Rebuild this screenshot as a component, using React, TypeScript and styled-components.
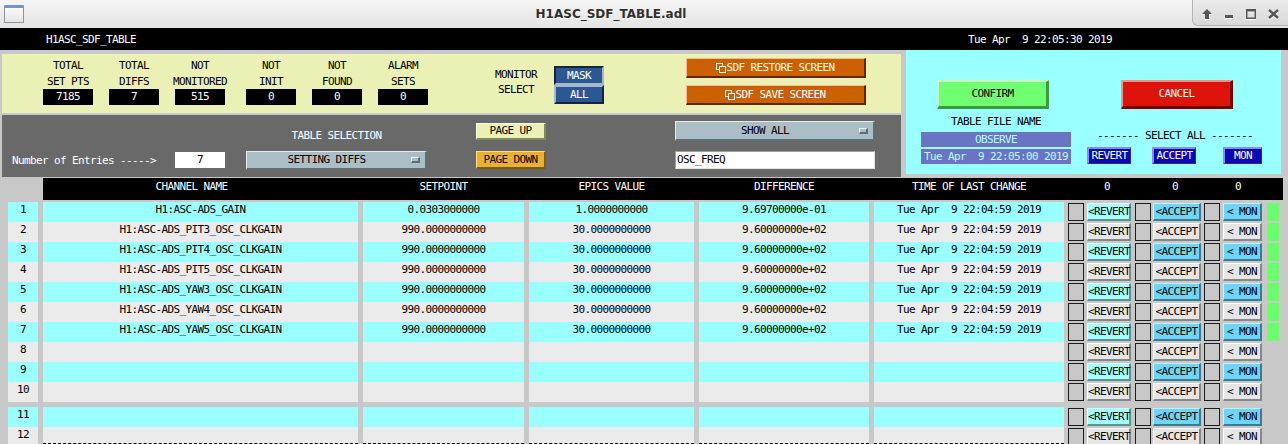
import styled, { createGlobalStyle, css } from "styled-components";

const GlobalStyle = createGlobalStyle`
  html, body {
    margin: 0;
    padding: 0;
    background: #c8c8c8;
    overflow: hidden;
  }
`;

// MEDM screens draw every label with the same narrow fixed-width font
const medmFont = css`
  font-family: "DejaVu Sans Mono", "Liberation Mono", monospace;
  font-size: 11px;
  letter-spacing: -0.62px;
  white-space: pre;
`;

const Window = styled.div`
  width: 1288px;
  height: 444px;
  display: flex;
  flex-direction: column;
  overflow: hidden;
  background: #c8c8c8;
`;

/* ---------- window decoration ---------- */

const TitleBar = styled.div`
  height: 28px;
  flex-shrink: 0;
  display: flex;
  align-items: flex-start;
  background: linear-gradient(#f5f5f5, #e3e3e3);
`;

const WindowIcon = styled.div`
  width: 20px;
  height: 18px;
  margin: 5px 0 0 4px;
  box-sizing: border-box;
  border: 1px solid #8d9297;
  border-top: 3px solid #6f97cb;
  border-radius: 1px;
  background: linear-gradient(#fbfbfb, #e4e4e4);
`;

const WindowTitle = styled.div`
  flex: 1;
  padding-left: 6px;
  text-align: center;
  font-family: "DejaVu Sans", sans-serif;
  font-weight: bold;
  font-size: 12px;
  line-height: 28px;
  color: #2f2f2f;
  text-shadow: 0 1px 0 #fff;
`;

const WindowControls = styled.div`
  width: 96px;
  height: 26px;
  box-sizing: border-box;
  padding: 2px 0 0 3px;
  display: flex;
  align-items: center;
  background: linear-gradient(#ebebeb, #d8d8d8);
  border-left: 1px solid #b3b3b3;
  border-bottom: 1px solid #b3b3b3;
  border-bottom-left-radius: 6px;
`;

const ControlSlot = styled.span`
  width: 22px;
  display: flex;
  justify-content: center;
  svg {
    filter: drop-shadow(0 1px 0 #ffffff);
  }
`;

/* ---------- screen ---------- */

const Screen = styled.div`
  flex: 1;
  display: flex;
  flex-direction: column;
  ${medmFont}
`;

const HeadBar = styled.div`
  height: 22px;
  flex-shrink: 0;
  background: #000;
  color: #fff;
  display: flex;
  align-items: center;
  justify-content: space-between;
  padding: 0 176px 0 46px;
`;

const Upper = styled.div`
  height: 127px;
  flex-shrink: 0;
  display: flex;
  padding-left: 2px;
`;

const LeftColumn = styled.div`
  width: 899px;
  display: flex;
  flex-direction: column;
  gap: 2px;
  padding-top: 4px;
`;

const SummaryPanel = styled.div`
  height: 59px;
  background: #ebf1b5;
  color: #000;
  display: flex;
  align-items: flex-start;
`;

const Stat = styled.div<{ $ml: number }>`
  width: 50px;
  margin-left: ${(p) => p.$ml}px;
  padding-top: 4px;
  display: flex;
  flex-direction: column;
  align-items: center;
`;

const StatLabel = styled.span`
  line-height: 15.5px;
`;

const StatValue = styled.div`
  width: 50px;
  height: 16px;
  line-height: 16px;
  text-align: center;
  background: #000;
  color: #fff;
`;

const MonitorLabel = styled.div`
  width: 60px;
  margin-left: 58px;
  padding-top: 13px;
  display: flex;
  flex-direction: column;
  align-items: center;
  line-height: 15.3px;
`;

const ChoiceStack = styled.div`
  width: 50px;
  margin-left: 8px;
  padding-top: 12px;
  display: flex;
  flex-direction: column;
`;

const ChoiceButton = styled.div<{ $active?: boolean }>`
  height: 19px;
  box-sizing: border-box;
  border: 2px solid;
  border-color: ${(p) =>
    p.$active ? "#13253d #a7b7ca #a7b7ca #13253d" : "#a7b7ca #13253d #13253d #a7b7ca"};
  background: #2b5892;
  color: #fff;
  text-align: center;
  line-height: 15px;
`;

const RelatedStack = styled.div`
  margin-left: 82px;
  padding-top: 4px;
  display: flex;
  flex-direction: column;
  gap: 7px;
`;

const RelatedButton = styled.div`
  width: 180px;
  height: 20px;
  box-sizing: border-box;
  border-style: solid;
  border-width: 1px 2px 2px 1px;
  border-color: #f3bb90 #5c2a00 #5c2a00 #f3bb90;
  background: #cc6000;
  color: #fff;
  display: flex;
  align-items: center;
  justify-content: center;
  line-height: 17px;
`;

const SelectionPanel = styled.div`
  height: 62px;
  background: #696969;
  color: #fff;
  display: flex;
  align-items: flex-start;
`;

const SelCol = styled.div<{ $ml: number; $w: number }>`
  width: ${(p) => p.$w}px;
  margin-left: ${(p) => p.$ml}px;
  padding-top: 6px;
  display: flex;
  flex-direction: column;
  gap: 9px;
`;

const Slot = styled.div`
  height: 20px;
  display: flex;
  align-items: center;
  justify-content: center;
`;

const EntriesLabel = styled.span`
  width: 163px;
`;

const SelectionTitle = styled.span`
  margin-top: 8px;
`;

const EntryBox = styled.div`
  width: 50px;
  height: 16px;
  line-height: 16px;
  text-align: center;
  background: #fff;
  color: #000;
`;

const MenuButton = styled.div<{ $h: number }>`
  width: 100%;
  height: ${(p) => p.$h}px;
  box-sizing: border-box;
  border-style: solid;
  border-width: 1px 2px 2px 1px;
  border-color: #e4ecef #5f6e74 #5f6e74 #e4ecef;
  background: #abbec6;
  color: #000;
  display: flex;
  align-items: center;
`;

const MenuText = styled.span`
  flex: 1;
  text-align: center;
`;

const MenuIndicator = styled.span`
  width: 9px;
  height: 6px;
  margin: 0 5px;
  box-sizing: border-box;
  border-style: solid;
  border-width: 1px 2px 2px 1px;
  border-color: #eef3f5 #5f6e74 #5f6e74 #eef3f5;
`;

const ShadeButton = styled.div<{ $bg: string; $light: string; $dark: string; $h: number }>`
  width: 100%;
  height: ${(p) => p.$h}px;
  box-sizing: border-box;
  border-style: solid;
  border-width: 1px 2px 2px 1px;
  border-color: ${(p) => `${p.$light} ${p.$dark} ${p.$dark} ${p.$light}`};
  background: ${(p) => p.$bg};
  color: #000;
  text-align: center;
  line-height: ${(p) => p.$h - 3}px;
`;

const TextEntry = styled.div`
  width: 100%;
  height: 18px;
  box-sizing: border-box;
  border: 1px solid;
  border-color: #a0a0a0 #e6e6e6 #e6e6e6 #a0a0a0;
  background: #fff;
  color: #000;
  padding-left: 1px;
  line-height: 16px;
`;

const ControlPanel = styled.div`
  width: 375px;
  height: 124px;
  margin-left: 5px;
  box-sizing: border-box;
  padding: 30px 0 0 15px;
  background: #99ffff;
  color: #000;
  display: grid;
  grid-template-columns: 150px 176px;
  column-gap: 16px;
  align-content: start;
`;

const BigButton = styled.div<{ $ml: number; $bg: string; $light: string; $dark: string; $fg: string }>`
  width: 112px;
  height: 29px;
  margin-left: ${(p) => p.$ml}px;
  box-sizing: border-box;
  border-style: solid;
  border-width: 2px 3px 3px 2px;
  border-color: ${(p) => `${p.$light} ${p.$dark} ${p.$dark} ${p.$light}`};
  background: ${(p) => p.$bg};
  color: ${(p) => p.$fg};
  text-align: center;
  line-height: 24px;
`;

const FileStack = styled.div`
  display: flex;
  flex-direction: column;
  align-items: center;
`;

const FileLabel = styled.span`
  margin-top: 5px;
  line-height: 15px;
`;

const FileBox = styled.div<{ $mt: number }>`
  width: 150px;
  height: 15px;
  margin-top: ${(p) => p.$mt}px;
  background: #6b74c4;
  color: #b4ffff;
  text-align: center;
  line-height: 15px;
`;

const SelectStack = styled.div`
  display: flex;
  flex-direction: column;
`;

const SelectAllLine = styled.span`
  margin-top: 19px;
  line-height: 15px;
  text-align: center;
`;

const SelectRow = styled.div`
  margin-top: 4px;
  display: flex;
`;

const SelectAllButton = styled.div<{ $w: number; $ml: number }>`
  width: ${(p) => p.$w}px;
  height: 17px;
  margin-left: ${(p) => p.$ml}px;
  box-sizing: border-box;
  border-style: solid;
  border-width: 2px 1px 1px 2px;
  border-color: #8a8aee #2a2a8a #2a2a8a #8a8aee;
  background: #0909b6;
  color: #fff;
  text-align: center;
  line-height: 14px;
`;

/* ---------- table ---------- */

const TableArea = styled.div`
  padding-top: 1px;
  color: #000;
`;

const HeaderRow = styled.div`
  height: 22px;
  padding-left: 43px;
  margin-bottom: 2px;
  display: flex;
`;

const HeaderBar = styled.div`
  width: 1240px;
  background: #000;
  color: #fff;
  display: grid;
  grid-template-columns: 315px 161px 165px 170px 190px 1fr;
  column-gap: 5px;
  line-height: 18px;
`;

const HeaderCell = styled.span<{ $pr?: number }>`
  text-align: center;
  padding-right: ${(p) => p.$pr ?? 0}px;
`;

const Counts = styled.div`
  display: flex;
  padding-left: 26px;
`;

const Count = styled.span<{ $ml: number }>`
  width: 24px;
  margin-left: ${(p) => p.$ml}px;
  text-align: center;
`;

const RowGroup = styled.div<{ $mt?: number }>`
  margin-top: ${(p) => p.$mt ?? 0}px;
  display: flex;
  flex-direction: column;
`;

const Row = styled.div`
  height: 20px;
  padding-left: 8px;
  display: grid;
  grid-template-columns: 30px 315px 161px 165px 170px 190px auto;
  column-gap: 5px;
`;

const Cell = styled.div<{ $alt: boolean; $dashed?: boolean }>`
  background: ${(p) => (p.$alt ? "#99ffff" : "#ebebeb")};
  text-align: center;
  line-height: 15px;
  overflow: hidden;
  ${(p) =>
    p.$dashed &&
    css`
      height: 16px;
      border-bottom: 1px dashed #000;
    `}
`;

const Actions = styled.div`
  margin-left: -1px;
  padding-top: 1px;
  display: flex;
  align-items: flex-start;
`;

const CheckBox = styled.div<{ $ml?: number }>`
  width: 16px;
  height: 18px;
  margin-left: ${(p) => p.$ml ?? 0}px;
  box-sizing: border-box;
  border: 1px solid #1c1c1c;
  background: #c8c8c8;
`;

type Tone = "pale" | "sky" | "gray";

const tones: Record<Tone, { bg: string; light: string; dark: string }> = {
  pale: { bg: "#a2ffff", light: "#e2ffff", dark: "#5f8f8f" },
  sky: { bg: "#6dd5f7", light: "#c4f1ff", dark: "#3d7a8f" },
  gray: { bg: "#e6e6e6", light: "#ffffff", dark: "#868686" },
};

const RowButton = styled.div<{ $w: number; $ml: number; $tone: Tone }>`
  width: ${(p) => p.$w}px;
  height: 18px;
  margin-left: ${(p) => p.$ml}px;
  box-sizing: border-box;
  border-style: solid;
  border-width: 1px 2px 2px 1px;
  border-color: ${(p) => {
    const t = tones[p.$tone];
    return `${t.light} ${t.dark} ${t.dark} ${t.light}`;
  }};
  background: ${(p) => tones[p.$tone].bg};
  text-align: center;
  line-height: 15px;
  overflow: visible;
`;

const Indicator = styled.div`
  width: 12px;
  height: 18px;
  margin-left: 5px;
  background: #6cff6c;
`;

/* ---------- icons ---------- */

const iconColor = "#565656";

const UpIcon = () => (
  <svg width="10" height="10" viewBox="0 0 10 10">
    <polygon points="5,0 10,5 7,5 7,10 3,10 3,5 0,5" fill={iconColor} />
  </svg>
);

const MinIcon = () => (
  <svg width="8" height="10" viewBox="0 0 8 10">
    <rect x="0" y="6" width="8" height="3" fill={iconColor} />
  </svg>
);

const MaxIcon = () => (
  <svg width="10" height="10" viewBox="0 0 10 10">
    <path d="M0 0h10v10H0z M1.5 2.5v6h7v-6z" fill={iconColor} fillRule="evenodd" />
  </svg>
);

const CloseIcon = () => (
  <svg width="11" height="10" viewBox="0 0 11 10">
    <path d="M1 1l9 8M10 1l-9 8" stroke={iconColor} strokeWidth="2.4" />
  </svg>
);

const RelatedIcon = () => (
  <svg width="10" height="10" viewBox="0 0 10 10">
    <rect x="0.5" y="0.5" width="6" height="6" fill="none" stroke="#fff" />
    <rect x="3.5" y="3.5" width="6" height="6" fill="#cc6000" stroke="#fff" />
  </svg>
);

/* ---------- data ---------- */

const summary = [
  { top: "TOTAL", bottom: "SET PTS", value: "7185", ml: 41 },
  { top: "TOTAL", bottom: "DIFFS", value: "7", ml: 16 },
  { top: "NOT", bottom: "MONITORED", value: "515", ml: 16 },
  { top: "NOT", bottom: "INIT", value: "0", ml: 21 },
  { top: "NOT", bottom: "FOUND", value: "0", ml: 16 },
  { top: "ALARM", bottom: "SETS", value: "0", ml: 16 },
];

interface IDiff {
  channel: string;
  setpoint: string;
  epics: string;
  diff: string;
  time: string;
}

const changed = "Tue Apr  9 22:04:59 2019";

const clkGain = (name: string): IDiff => ({
  channel: `H1:ASC-ADS_${name}_OSC_CLKGAIN`,
  setpoint: "990.0000000000",
  epics: "30.0000000000",
  diff: "9.60000000e+02",
  time: changed,
});

const diffs: IDiff[] = [
  {
    channel: "H1:ASC-ADS_GAIN",
    setpoint: "0.0303000000",
    epics: "1.0000000000",
    diff: "9.69700000e-01",
    time: changed,
  },
  clkGain("PIT3"),
  clkGain("PIT4"),
  clkGain("PIT5"),
  clkGain("YAW3"),
  clkGain("YAW4"),
  clkGain("YAW5"),
];

function DiffRow({ index }: { index: number }) {
  const d = diffs[index - 1];
  const alt = index % 2 === 1;
  const last = index === 12;
  return (
    <Row>
      <Cell $alt={alt}>{index}</Cell>
      <Cell $alt={alt} $dashed={last}>{d?.channel}</Cell>
      <Cell $alt={alt} $dashed={last}>{d?.setpoint}</Cell>
      <Cell $alt={alt} $dashed={last}>{d?.epics}</Cell>
      <Cell $alt={alt} $dashed={last}>{d?.diff}</Cell>
      <Cell $alt={alt} $dashed={last}>{d?.time}</Cell>
      <Actions>
        <CheckBox />
        <RowButton $w={44} $ml={3} $tone={alt ? "pale" : "gray"}>{"<REVERT"}</RowButton>
        <CheckBox $ml={4} />
        <RowButton $w={48} $ml={2} $tone={alt ? "sky" : "gray"}>{"<ACCEPT"}</RowButton>
        <CheckBox $ml={3} />
        <RowButton $w={39} $ml={3} $tone={alt ? "sky" : "gray"}>{"< MON"}</RowButton>
        {d && <Indicator />}
      </Actions>
    </Row>
  );
}

function App() {
  return (
    <Window>
      <GlobalStyle />
      <TitleBar>
        <WindowIcon />
        <WindowTitle>H1ASC_SDF_TABLE.adl</WindowTitle>
        <WindowControls>
          <ControlSlot><UpIcon /></ControlSlot>
          <ControlSlot><MinIcon /></ControlSlot>
          <ControlSlot><MaxIcon /></ControlSlot>
          <ControlSlot><CloseIcon /></ControlSlot>
        </WindowControls>
      </TitleBar>

      <Screen>
        <HeadBar>
          <span>H1ASC_SDF_TABLE</span>
          <span>Tue Apr  9 22:05:30 2019</span>
        </HeadBar>

        <Upper>
          <LeftColumn>
            <SummaryPanel>
              {summary.map((s) => (
                <Stat key={s.bottom} $ml={s.ml}>
                  <StatLabel>{s.top}</StatLabel>
                  <StatLabel>{s.bottom}</StatLabel>
                  <StatValue>{s.value}</StatValue>
                </Stat>
              ))}
              <MonitorLabel>
                <span>MONITOR</span>
                <span>SELECT</span>
              </MonitorLabel>
              <ChoiceStack>
                <ChoiceButton $active>MASK</ChoiceButton>
                <ChoiceButton>ALL</ChoiceButton>
              </ChoiceStack>
              <RelatedStack>
                <RelatedButton>
                  <RelatedIcon />
                  SDF RESTORE SCREEN
                </RelatedButton>
                <RelatedButton>
                  <RelatedIcon />
                  SDF SAVE SCREEN
                </RelatedButton>
              </RelatedStack>
            </SummaryPanel>

            <SelectionPanel>
              <SelCol $ml={10} $w={213}>
                <Slot />
                <Slot>
                  <EntriesLabel>Number of Entries -----&gt;</EntriesLabel>
                  <EntryBox>7</EntryBox>
                </Slot>
              </SelCol>
              <SelCol $ml={21} $w={181}>
                <Slot>
                  <SelectionTitle>TABLE SELECTION</SelectionTitle>
                </Slot>
                <Slot>
                  <MenuButton $h={19}>
                    <MenuText>SETTING DIFFS</MenuText>
                    <MenuIndicator />
                  </MenuButton>
                </Slot>
              </SelCol>
              <SelCol $ml={49} $w={70}>
                <Slot>
                  <ShadeButton $h={17} $bg="#ebf1b5" $light="#fbfde9" $dark="#85875f">
                    PAGE UP
                  </ShadeButton>
                </Slot>
                <Slot>
                  <ShadeButton $h={18} $bg="#e9b12e" $light="#f8dc96" $dark="#7e5d0f">
                    PAGE DOWN
                  </ShadeButton>
                </Slot>
              </SelCol>
              <SelCol $ml={129} $w={200}>
                <Slot>
                  <MenuButton $h={20}>
                    <MenuText>SHOW ALL</MenuText>
                    <MenuIndicator />
                  </MenuButton>
                </Slot>
                <Slot>
                  <TextEntry>OSC_FREQ</TextEntry>
                </Slot>
              </SelCol>
            </SelectionPanel>
          </LeftColumn>

          <ControlPanel>
            <BigButton $ml={16} $bg="#70ff70" $light="#c6ffc6" $dark="#3b9a3b" $fg="#000">
              CONFIRM
            </BigButton>
            <BigButton $ml={34} $bg="#de1309" $light="#f29090" $dark="#7a0000" $fg="#fff">
              CANCEL
            </BigButton>
            <FileStack>
              <FileLabel>TABLE FILE NAME</FileLabel>
              <FileBox $mt={3}>OBSERVE</FileBox>
              <FileBox $mt={2}>Tue Apr  9 22:05:00 2019</FileBox>
            </FileStack>
            <SelectStack>
              <SelectAllLine>------- SELECT ALL -------</SelectAllLine>
              <SelectRow>
                <SelectAllButton $w={44} $ml={0}>REVERT</SelectAllButton>
                <SelectAllButton $w={44} $ml={21}>ACCEPT</SelectAllButton>
                <SelectAllButton $w={39} $ml={27}>MON</SelectAllButton>
              </SelectRow>
            </SelectStack>
          </ControlPanel>
        </Upper>

        <TableArea>
          <HeaderRow>
            <HeaderBar>
              <HeaderCell $pr={18}>CHANNEL NAME</HeaderCell>
              <HeaderCell>SETPOINT</HeaderCell>
              <HeaderCell>EPICS VALUE</HeaderCell>
              <HeaderCell>DIFFERENCE</HeaderCell>
              <HeaderCell>TIME OF LAST CHANGE</HeaderCell>
              <Counts>
                <Count $ml={0}>0</Count>
                <Count $ml={44}>0</Count>
                <Count $ml={39}>0</Count>
              </Counts>
            </HeaderBar>
          </HeaderRow>
          <RowGroup>
            {[1, 2, 3, 4, 5, 6, 7, 8, 9, 10].map((i) => (
              <DiffRow key={i} index={i} />
            ))}
          </RowGroup>
          <RowGroup $mt={5}>
            <DiffRow index={11} />
            <DiffRow index={12} />
          </RowGroup>
        </TableArea>
      </Screen>
    </Window>
  );
}

export default App;
